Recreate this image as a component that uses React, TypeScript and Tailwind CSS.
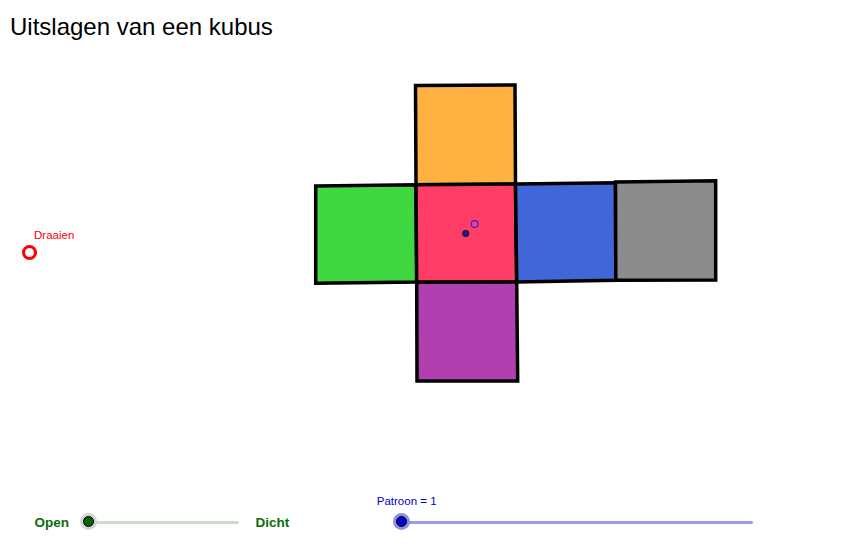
const font = "font-['Liberation_Sans',Arial,sans-serif]";

type Pt = [number, number];

const faces: { fill: string; pts: Pt[] }[] = [
  { fill: "#ffb142", pts: [[415.5, 85.5], [515, 85], [515.5, 184.3], [416, 184.7]] },
  { fill: "#40d840", pts: [[315.7, 186], [416, 184.7], [416.7, 282], [315.7, 283.3]] },
  { fill: "#ff3d66", pts: [[416, 184.7], [515.5, 184], [516.7, 282], [416.7, 282.3]] },
  { fill: "#4066d8", pts: [[515.5, 184], [615.5, 182.7], [615.8, 280.3], [516.7, 282]] },
  { fill: "#8c8c8c", pts: [[615.5, 182], [715.7, 180.8], [715.7, 280], [615.8, 280.3]] },
  { fill: "#b040b0", pts: [[416.7, 282.3], [516.7, 282], [517.7, 381], [417, 381]] },
];

function Slider({
  width,
  track,
  knob,
  halo,
}: {
  width: number;
  track: string;
  knob: string;
  halo: string;
}) {
  return (
    <div className="relative h-[18px]" style={{ width }}>
      <div className={`absolute left-0 right-0 top-[7.5px] h-[3px] rounded-full ${track}`} />
      <div className={`absolute -left-[8.5px] top-0 w-[17px] h-[17px] rounded-full ${halo}`} />
      <div
        className={`absolute -left-[5.5px] top-[3px] w-[11px] h-[11px] rounded-full border border-black ${knob}`}
      />
    </div>
  );
}

export default function App() {
  return (
    <div className={`relative w-[850px] h-[558px] bg-white overflow-hidden flex flex-col ${font}`}>
      {/* graphics view */}
      <svg className="absolute inset-0" width={850} height={558}>
        {faces.map((f, i) => (
          <polygon
            key={i}
            points={f.pts.map((p) => p.join(",")).join(" ")}
            fill={f.fill}
            stroke="#000"
            strokeWidth={3.5}
            strokeLinejoin="miter"
          />
        ))}
        <circle cx={465.7} cy={233.5} r={3.2} fill="#1a1a8c" stroke="#111" strokeWidth={0.8} />
        <circle cx={474.7} cy={224} r={3.4} fill="none" stroke="#2323ff" strokeWidth={1.1} />

        <text x={34} y={238.7} fontSize={11.5} fill="#ff0000" fontFamily="'Liberation Sans', Arial, sans-serif">
          Draaien
        </text>
        <circle cx={29.5} cy={252.5} r={6} fill="none" stroke="#ff0000" strokeWidth={3} />
      </svg>

      <h1 className="relative pl-[10px] pt-[15px] text-[24px] leading-[24px] font-normal text-black">
        Uitslagen van een kubus
      </h1>

      <div className="flex-1" />

      {/* controls */}
      <div className="relative flex items-end pl-[34.5px] pb-[27px]">
        <div className="flex items-center">
          <span className="text-[13.5px] font-bold text-[#0b6b0b] leading-none mt-[2px]">Open</span>
          <div className="ml-[19.5px]">
            <Slider width={150} track="bg-[#cbdccb]" knob="bg-[#006400]" halo="bg-[#d4d4d4]" />
          </div>
          <span className="ml-[17px] text-[13.5px] font-bold text-[#0b6b0b] leading-none mt-[2px]">Dicht</span>
        </div>

        <div className="ml-[87.5px] flex flex-col">
          <span className="text-[11.5px] leading-[13px] text-[#0000cc]">Patroon = 1</span>
          <div className="mt-[5px] ml-[25px]">
            <Slider width={351} track="bg-[#9a9ae8]" knob="bg-[#0000cc]" halo="bg-[#9090e0]" />
          </div>
        </div>
      </div>
    </div>
  );
}
